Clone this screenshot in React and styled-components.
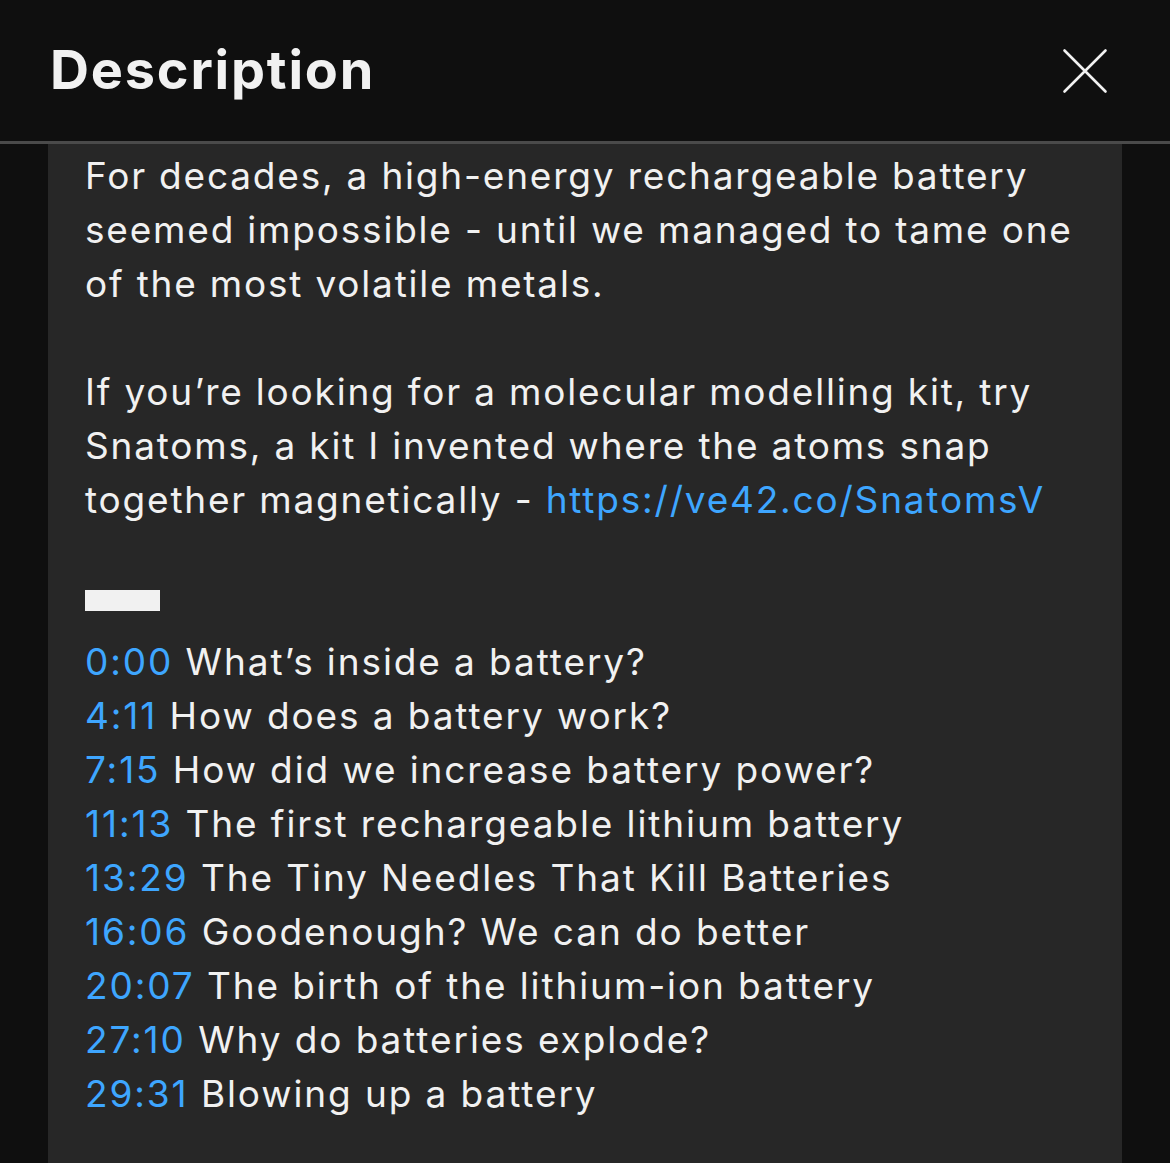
import styled, { createGlobalStyle } from "styled-components";

const GlobalStyle = createGlobalStyle`
  html, body {
    margin: 0;
    padding: 0;
    background: #0f0f0f;
  }
  body {
    font-family: Inter, "Liberation Sans", sans-serif;
    color: #f1f1f1;
  }
`;

const Page = styled.div`
  width: 1170px;
  height: 1163px;
  background: #0f0f0f;
  overflow: hidden;
  display: flex;
  flex-direction: column;
`;

const Header = styled.header`
  height: 141px;
  flex-shrink: 0;
  display: flex;
  align-items: center;
  justify-content: space-between;
  padding: 0 62px 0 50px;
  border-bottom: 3px solid #4a4a4a;
`;

const Title = styled.h1`
  margin: 0 0 2px;
  font-size: 54px;
  font-weight: 700;
  letter-spacing: 1.8px;
  color: #f1f1f1;
`;

const CloseButton = styled.button`
  background: none;
  border: 0;
  padding: 0;
  width: 46px;
  height: 46px;
  display: flex;
  align-items: center;
  justify-content: center;
  cursor: pointer;
`;

const Panel = styled.div`
  flex: 1;
  margin: 0 48px;
  background: #272727;
  padding: 5px 30px 0 37px;
`;

const Para = styled.p`
  margin: 0 0 54px;
  font-size: 37px;
  line-height: 54px;
  letter-spacing: 1.8px;
  color: #f1f1f1;
`;

const Link = styled.a`
  color: #3ea6ff;
  text-decoration: none;
`;

// the separator line in the description, drawn as a solid bar
const Dash = styled.div`
  width: 75px;
  height: 21px;
  margin: 63px 0 24px;
  background: #f1f1f1;
`;

const Chapter = styled.div`
  font-size: 37px;
  line-height: 54px;
  letter-spacing: 1.9px;
`;

const chapters = [
  ["0:00", "What\u2019s inside a battery?"],
  ["4:11", "How does a battery work?"],
  ["7:15", "How did we increase battery power?"],
  ["11:13", "The first rechargeable lithium battery"],
  ["13:29", "The Tiny Needles That Kill Batteries"],
  ["16:06", "Goodenough? We can do better"],
  ["20:07", "The birth of the lithium-ion battery"],
  ["27:10", "Why do batteries explode?"],
  ["29:31", "Blowing up a battery"],
];

export default function App() {
  return (
    <Page>
      <GlobalStyle />
      <Header>
        <Title>Description</Title>
        <CloseButton aria-label="Close">
          <svg width="46" height="46" viewBox="0 0 46 46">
            <path d="M2.5 2.5 L43.5 43.5 M43.5 2.5 L2.5 43.5" stroke="#f1f1f1" strokeWidth="2.6" strokeLinecap="round" />
          </svg>
        </CloseButton>
      </Header>
      <Panel>
        <Para>
          For decades, a high-energy rechargeable battery seemed impossible - until we managed to tame one of the most volatile metals.
        </Para>
        <Para>
          If you’re looking for a molecular modelling kit, try Snatoms, a kit I invented where the atoms snap together magnetically - <Link href="#">https://ve42.co/SnatomsV</Link>
        </Para>
        <Dash />
        {chapters.map(([t, label]) => (
          <Chapter key={t}>
            <Link href="#">{t}</Link> {label}
          </Chapter>
        ))}
      </Panel>
    </Page>
  );
}
